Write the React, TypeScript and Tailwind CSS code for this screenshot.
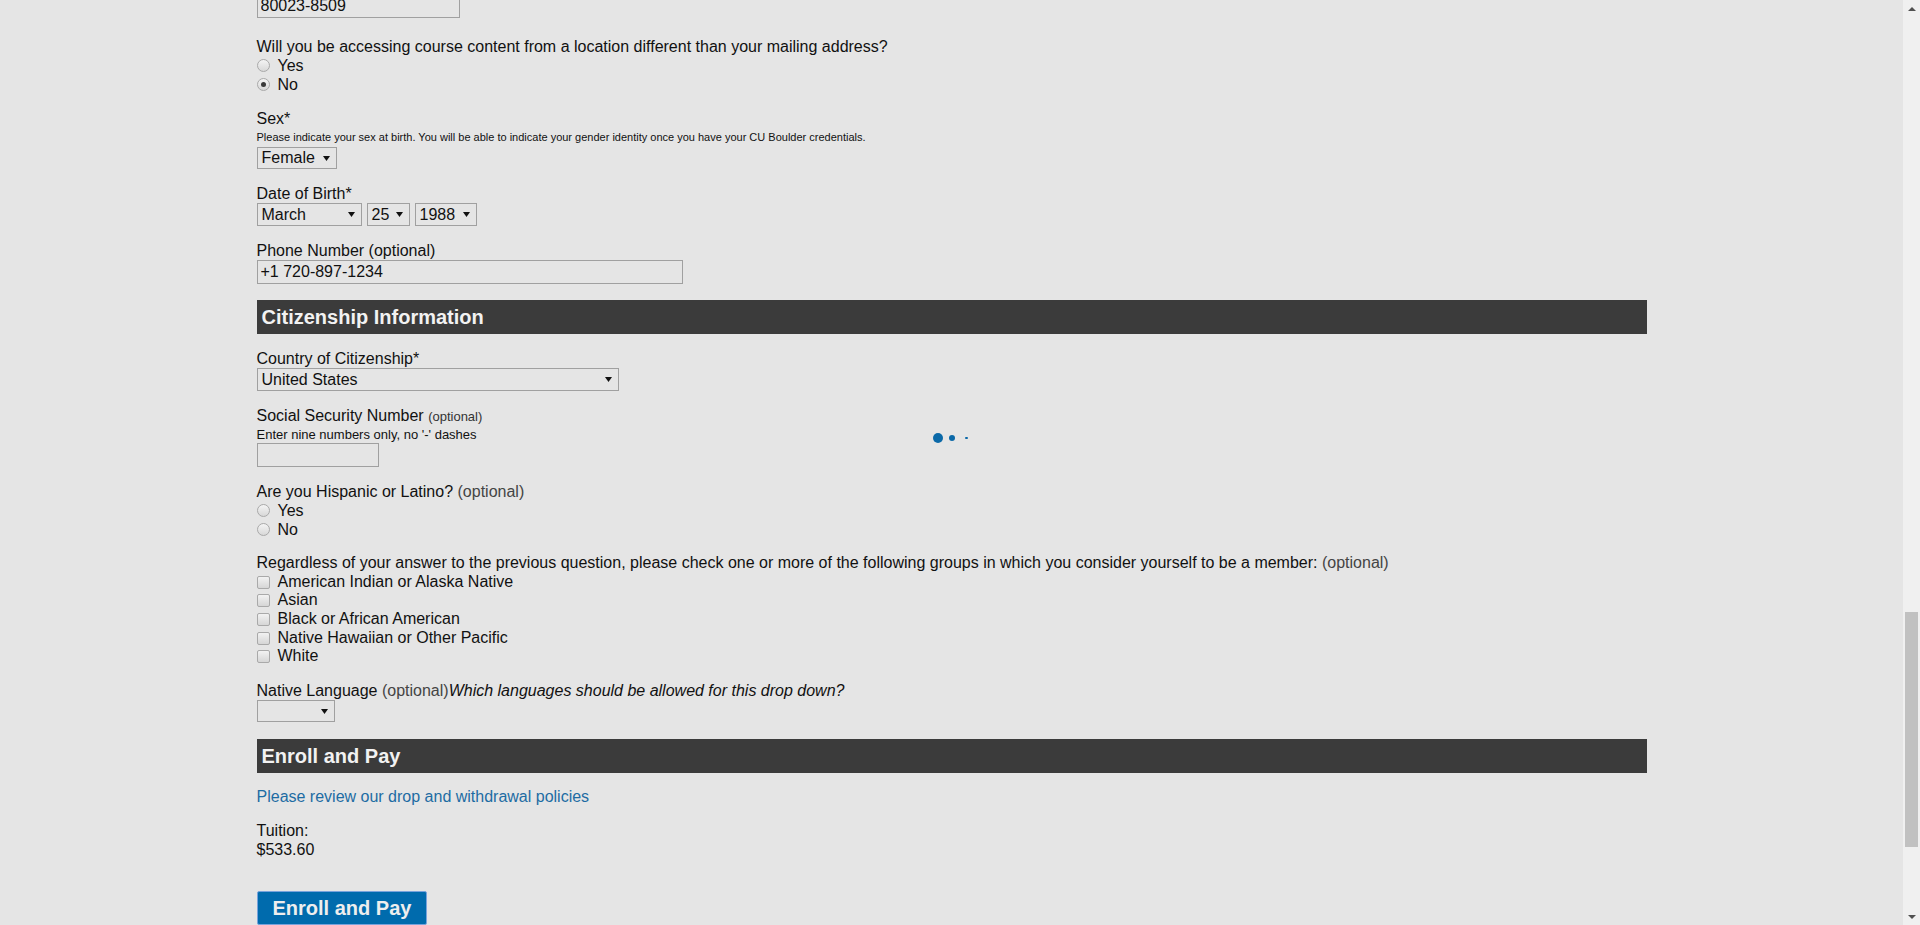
import React from 'react'

const font = { fontFamily: '"Liberation Sans", Arial, sans-serif' }

function Select({ value, width, className = '' }: { value: string; width: string; className?: string }) {
  return (
    <div
      className={`flex h-[22px] items-center justify-between border border-[#a0a0a0] pl-[4px] pr-[6px] text-[16px] leading-none text-[#111] ${width} ${className}`}
    >
      <span>{value}</span>
      <svg width="7" height="5" viewBox="0 0 7 5" className="shrink-0">
        <polygon points="0,0 7,0 3.5,5" fill="#111" />
      </svg>
    </div>
  )
}

function TextBox({ value, width, className = '' }: { value?: string; width: string; className?: string }) {
  return (
    <input
      readOnly
      defaultValue={value}
      className={`block h-[24px] border border-[#a0a0a0] bg-transparent px-[3px] text-[16px] leading-none text-[#111] outline-none ${width} ${className}`}
    />
  )
}

function Radio({ label, checked }: { label: string; checked?: boolean }) {
  return (
    <div className="flex h-[19px] items-center">
      <span className="mr-[8px] flex h-[13px] w-[13px] items-center justify-center rounded-full border border-[#a9a9a9] bg-gradient-to-b from-[#f4f4f4] to-[#d8d8d8]">
        {checked && <span className="h-[5px] w-[5px] rounded-full bg-[#3a3a3a]" />}
      </span>
      <span>{label}</span>
    </div>
  )
}

function Check({ label }: { label: string }) {
  return (
    <div className="flex h-[18.7px] items-center">
      <span className="mr-[8px] h-[13px] w-[13px] rounded-[2px] border border-[#a9a9a9] bg-gradient-to-b from-[#f2f2f2] to-[#d6d6d6]" />
      <span>{label}</span>
    </div>
  )
}

function SectionBar({ title, className = '' }: { title: string; className?: string }) {
  return (
    <div className={`flex h-[34px] items-center bg-[#3b3b3b] px-[5px] ${className}`}>
      <h2 className="text-[20px] font-bold leading-[23px] text-[#f2f2f2]">{title}</h2>
    </div>
  )
}

function Scrollbar() {
  return (
    <div className="flex h-full w-[17px] shrink-0 flex-col bg-[#f0f0f0]">
      <div className="flex h-[17px] items-center justify-center">
        <svg width="8" height="4" viewBox="0 0 8 4">
          <polygon points="0,4 8,4 4,0" fill="#505050" />
        </svg>
      </div>
      <div className="flex-1">
        <div className="mx-[2px] mt-[595px] h-[235px] bg-[#c1c1c1]" />
      </div>
      <div className="flex h-[17px] items-center justify-center">
        <svg width="8" height="4" viewBox="0 0 8 4">
          <polygon points="0,0 8,0 4,4" fill="#505050" />
        </svg>
      </div>
    </div>
  )
}

export default function App() {
  return (
    <div className="flex h-[925px] w-full overflow-hidden bg-[#e5e5e5]" style={font}>
      <main className="relative h-full flex-1 overflow-hidden">
        <form className="mx-auto w-[1390px] text-[16px] leading-[19px] text-[#111]">
          <TextBox value="80023-8509" width="w-[203px]" className="-mt-[6px]" />

          <fieldset className="mt-[19px]">
            <p>Will you be accessing course content from a location different than your mailing address?</p>
            <Radio label="Yes" />
            <Radio label="No" checked />
          </fieldset>

          <div className="mt-[15px]">
            <p>Sex*</p>
            <p className="text-[11px] leading-[19px]">
              Please indicate your sex at birth. You will be able to indicate your gender identity once you have your CU
              Boulder credentials.
            </p>
            <Select value="Female" width="w-[80px]" />
          </div>

          <div className="mt-[15px]">
            <p>Date of Birth*</p>
            <div className="flex gap-[5px]">
              <Select value="March" width="w-[105px]" className="h-[23px]" />
              <Select value="25" width="w-[43px]" className="h-[23px]" />
              <Select value="1988" width="w-[62px]" className="h-[23px]" />
            </div>
          </div>

          <div className="mt-[15px]">
            <p>Phone Number (optional)</p>
            <TextBox value="+1 720-897-1234" width="w-[426px]" />
          </div>

          <SectionBar title="Citizenship Information" className="mt-[16px]" />

          <div className="mt-[15px]">
            <p>Country of Citizenship*</p>
            <Select value="United States" width="w-[362px]" className="h-[23px]" />
          </div>

          <div className="mt-[15px]">
            <p>
              Social Security Number <span className="text-[13px] text-[#333]">(optional)</span>
            </p>
            <p className="text-[13px] leading-[17px]">Enter nine numbers only, no '-' dashes</p>
            <TextBox width="w-[122px]" />
          </div>

          <fieldset className="mt-[15px]">
            <p>
              Are you Hispanic or Latino? <span className="text-[#444]">(optional)</span>
            </p>
            <Radio label="Yes" />
            <Radio label="No" />
          </fieldset>

          <fieldset className="mt-[15px] leading-[18.7px]">
            <p>
              Regardless of your answer to the previous question, please check one or more of the following groups in
              which you consider yourself to be a member: <span className="text-[#444]">(optional)</span>
            </p>
            <Check label="American Indian or Alaska Native" />
            <Check label="Asian" />
            <Check label="Black or African American" />
            <Check label="Native Hawaiian or Other Pacific" />
            <Check label="White" />
          </fieldset>

          <div className="mt-[15px]">
            <p>
              Native Language <span className="text-[#444]">(optional)</span>
              <em>Which languages should be allowed for this drop down?</em>
            </p>
            <Select value="" width="w-[78px]" />
          </div>

          <SectionBar title="Enroll and Pay" className="mt-[17px]" />

          <a href="#" className="mt-[14px] block w-fit text-[#1d6ca3]">
            Please review our drop and withdrawal policies
          </a>

          <div className="mt-[15px]">
            <p>Tuition:</p>
            <p>$533.60</p>
          </div>

          <button
            type="button"
            className="mt-[32px] rounded-[2px] border border-[#78a3dc] bg-[#006bad] px-[15px] py-[4px] text-[20px] font-bold leading-[24px] text-[#eeeeee]"
          >
            Enroll and Pay
          </button>
        </form>

        {/* loading dots */}
        <div className="absolute left-[933px] top-[433px] flex items-center">
          <span className="h-[10px] w-[10px] rounded-full bg-[#0b69a8]" />
          <span className="ml-[6px] h-[6px] w-[6px] rounded-full bg-[#0b69a8]" />
          <span className="ml-[10px] h-[2.5px] w-[2.5px] rounded-full bg-[#0b69a8]" />
        </div>
      </main>
      <Scrollbar />
    </div>
  )
}
